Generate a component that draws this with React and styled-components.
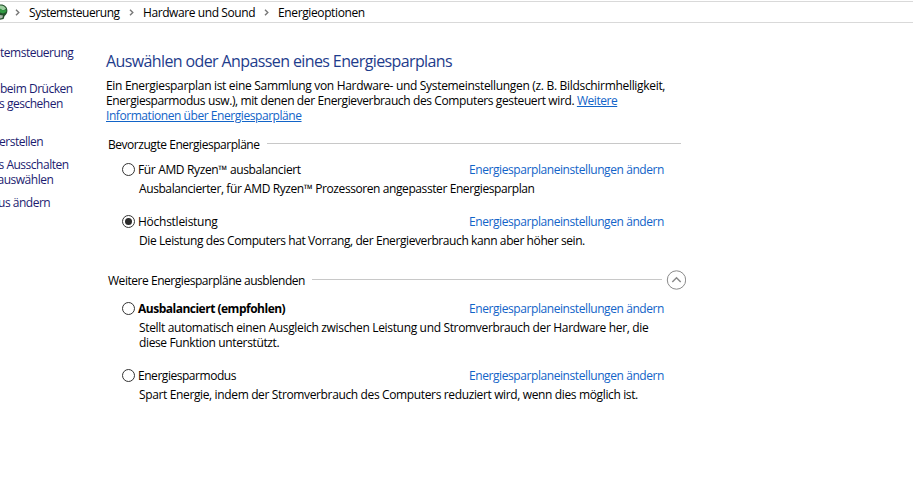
import React from 'react';
import styled, { createGlobalStyle } from 'styled-components';

const GlobalStyle = createGlobalStyle`
  body {
    margin: 0;
    background: #fff;
    color: #000;
    font-family: 'Open Sans', 'Noto Sans', sans-serif;
    font-size: 12px;
    line-height: 15px;
    overflow: hidden;
  }
`;

const Window = styled.div`
  width: 913px;
  height: 500px;
  overflow: hidden;
`;

const AddressBar = styled.nav`
  display: flex;
  align-items: center;
  box-sizing: border-box;
  height: 22px;
  margin-top: 1px;
  border-top: 1px solid #d9d9d9;
  border-bottom: 1px solid #d9d9d9;
`;

const AppIcon = styled.svg`
  flex: none;
  width: 8px;
  height: 18px;
`;

const Crumb = styled.span`
  width: ${props => props.$width}px;
  letter-spacing: ${props => props.$track}px;
  white-space: nowrap;
`;

const Chevron = styled.svg`
  flex: none;
  width: 5px;
  height: 7px;
  margin: 1px 9px 0 ${props => props.$gap || 9}px;
  fill: none;
  stroke: #777;
  stroke-width: 1.4;
`;

const Content = styled.div`
  display: flex;
`;

const Sidebar = styled.aside`
  flex: none;
  width: 106px;
  padding-top: 22px;
`;

const TaskLink = styled.a`
  display: block;
  margin-bottom: ${props => props.$after || 8}px;
  color: #1c1c70;
`;

const TaskLine = styled.span`
  display: block;
  margin-left: ${props => props.$shift || 0}px;
  letter-spacing: -0.48px;
  white-space: nowrap;
`;

const Main = styled.main`
  width: 580px;
  padding-top: 28px;
`;

const Title = styled.h1`
  margin: 0 0 7px;
  color: #1e3c8c;
  font-size: 16px;
  font-weight: 400;
  line-height: 20px;
  letter-spacing: -0.61px;
`;

const Intro = styled.p`
  margin: 0 0 14px;
`;

const Text = styled.span`
  letter-spacing: ${props => props.$track}px;
  white-space: pre;
`;

const InlineLink = styled.a`
  color: #1264c8;
  letter-spacing: ${props => props.$track}px;
  text-decoration: underline;
  text-underline-offset: 1px;
`;

const SectionHeader = styled.div`
  display: flex;
  align-items: center;
  height: 15px;
  margin: 0 0 ${props => props.$after}px 2px;
`;

const SectionLabel = styled.span`
  width: ${props => props.$width}px;
  letter-spacing: ${props => props.$track}px;
  white-space: nowrap;
`;

const Rule = styled.span`
  flex: none;
  width: ${props => props.$width}px;
  height: 1px;
  margin: 0 0 2px 7px;
  background: #c8c8c8;
`;

const CollapseIcon = styled.svg`
  flex: none;
  width: 20px;
  height: 20px;
  margin: 0 0 2px 4px;
  fill: none;
  stroke: #8a8a8a;
`;

const Plans = styled.div`
  margin-bottom: 25px;
`;

const Plan = styled.div`
  padding-left: 16px;

  & + & {
    margin-top: 18px;
  }
`;

const PlanHead = styled.div`
  display: flex;
  align-items: center;
  height: 15px;
  margin-bottom: 4px;
`;

const Radio = styled.span`
  display: flex;
  align-items: center;
  justify-content: center;
  flex: none;
  box-sizing: border-box;
  width: 13px;
  height: 13px;
  margin: 0 3px 0 0;
  border: 1px solid #333;
  border-radius: 50%;

  &::after {
    content: '';
    width: 7px;
    height: 7px;
    border-radius: 50%;
    background: ${props => props.$checked ? '#2b2b2b' : 'transparent'};
  }
`;

const PlanName = styled.span`
  width: 331px;
  font-weight: ${props => props.$bold ? 700 : 400};
  letter-spacing: ${props => props.$track}px;
  white-space: nowrap;
`;

const PlanLink = styled.a`
  color: #1264c8;
  letter-spacing: -0.42px;
  white-space: nowrap;
`;

const Description = styled.div`
  padding-left: 17px;
  white-space: nowrap;

  span {
    display: block;
  }
`;

const preferred = [
  {
    name: 'Für AMD Ryzen™ ausbalanciert',
    track: -0.355,
    lines: [['Ausbalancierter, für AMD Ryzen™ Prozessoren angepasster Energiesparplan', -0.41]],
  },
  {
    name: 'Höchstleistung',
    track: -0.26,
    checked: true,
    lines: [['Die Leistung des Computers hat Vorrang, der Energieverbrauch kann aber höher sein.', -0.405]],
  },
];

const additional = [
  {
    name: 'Ausbalanciert (empfohlen)',
    track: -0.5,
    bold: true,
    lines: [
      ['Stellt automatisch einen Ausgleich zwischen Leistung und Stromverbrauch der Hardware her, die', -0.338],
      ['diese Funktion unterstützt.', -0.37],
    ],
  },
  {
    name: 'Energiesparmodus',
    track: -0.46,
    lines: [['Spart Energie, indem der Stromverbrauch des Computers reduziert wird, wenn dies möglich ist.', -0.363]],
  },
];

const BreadcrumbArrow = ({ gap }) => (
  <Chevron $gap={gap} viewBox="0 0 5 7">
    <path d="M1 0.7 L3.8 3.5 L1 6.3" />
  </Chevron>
);

const PlanList = ({ plans }) => (
  <Plans>
    {plans.map(plan => (
      <Plan key={plan.name}>
        <PlanHead>
          <Radio $checked={plan.checked} />
          <PlanName $bold={plan.bold} $track={plan.track}>{plan.name}</PlanName>
          <PlanLink>Energiesparplaneinstellungen ändern</PlanLink>
        </PlanHead>
        <Description>
          {plan.lines.map(([line, track]) => <Text key={line} $track={track}>{line}</Text>)}
        </Description>
      </Plan>
    ))}
  </Plans>
);

const App = () => (
  <Window>
    <GlobalStyle />
    <AddressBar>
      <AppIcon viewBox="0 0 8 18">
        <path d="M0 1.5 C4 1 7.3 3.5 7.4 7.5 C7.5 10 6 12 4.6 13 L3.6 16 L0 16.8 Z" fill="#25502c" />
        <path d="M0 2.5 C3 2.2 5.5 3.8 6 6 L3 7.5 L0 6 Z" fill="#9ccf9f" />
        <path d="M0 5.5 L3 7.6 L6.4 6.4 L6.2 9 L3 10.6 L0 9.6 Z" fill="#2f9a41" />
        <path d="M0 12 L3 12.6 L2.4 15 L0 15.6 Z" fill="#a9b8ab" />
      </AppIcon>
      <BreadcrumbArrow gap={7} />
      <Crumb $width={91} $track={-0.45}>Systemsteuerung</Crumb>
      <BreadcrumbArrow />
      <Crumb $width={112} $track={-0.41}>Hardware und Sound</Crumb>
      <BreadcrumbArrow />
      <Crumb $width={88} $track={-0.38}>Energieoptionen</Crumb>
    </AddressBar>
    <Content>
      <Sidebar>
        <TaskLink $after={21}>
          <TaskLine>temsteuerung</TaskLine>
        </TaskLink>
        <TaskLink $after={23}>
          <TaskLine>beim Drücken</TaskLine>
          <TaskLine $shift={-1}>s geschehen</TaskLine>
        </TaskLink>
        <TaskLink>
          <TaskLine $shift={-1}>erstellen</TaskLine>
        </TaskLink>
        <TaskLink>
          <TaskLine $shift={-1.5}>s Ausschalten</TaskLine>
          <TaskLine $shift={-2.5}>auswählen</TaskLine>
        </TaskLink>
        <TaskLink>
          <TaskLine $shift={-2}>us ändern</TaskLine>
        </TaskLink>
      </Sidebar>
      <Main>
        <Title>Auswählen oder Anpassen eines Energiesparplans</Title>
        <Intro>
          <Text $track={-0.315}>Ein Energiesparplan ist eine Sammlung von Hardware- und Systemeinstellungen (z. B. Bildschirmhelligkeit,</Text>
          <br />
          <Text $track={-0.385}>{'Energiesparmodus usw.), mit denen der Energieverbrauch des Computers gesteuert wird. '}</Text>
          <InlineLink $track={-0.45}>Weitere</InlineLink>
          <br />
          <InlineLink $track={-0.44}>Informationen über Energiesparpläne</InlineLink>
        </Intro>
        <SectionHeader $after={10}>
          <SectionLabel $width={152} $track={-0.46}>Bevorzugte Energiesparpläne</SectionLabel>
          <Rule $width={414} />
        </SectionHeader>
        <PlanList plans={preferred} />
        <SectionHeader $after={13}>
          <SectionLabel $width={197} $track={-0.46}>Weitere Energiesparpläne ausblenden</SectionLabel>
          <Rule $width={350} />
          <CollapseIcon viewBox="0 0 20 20">
            <circle cx="10.5" cy="10" r="9.2" />
            <path d="M6.3 12 L10.5 7.8 L14.7 12" strokeWidth="1.5" />
          </CollapseIcon>
        </SectionHeader>
        <PlanList plans={additional} />
      </Main>
    </Content>
  </Window>
);

export default App;
